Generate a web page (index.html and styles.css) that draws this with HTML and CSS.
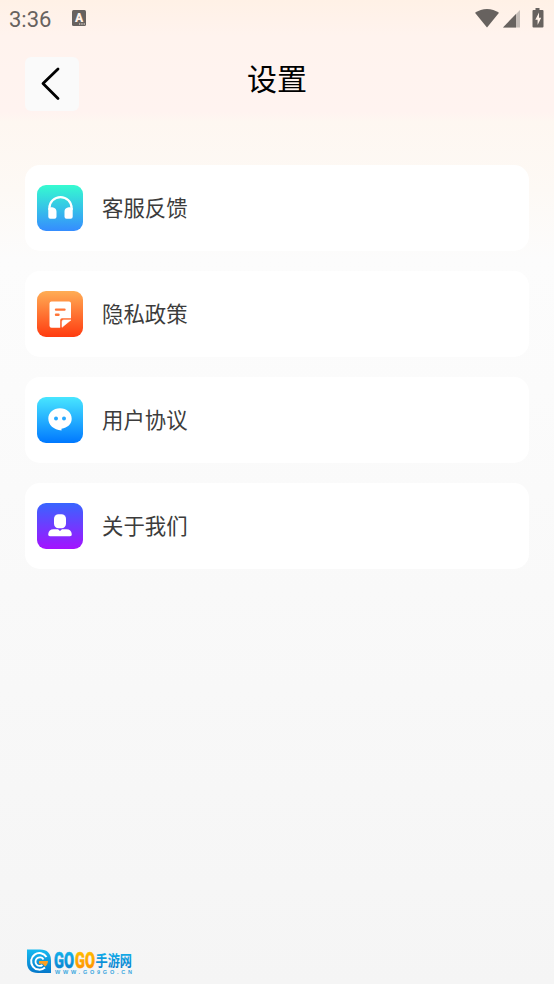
FILE: index.html
```html
<!DOCTYPE html>
<html lang="zh-CN">
<head>
    <meta charset="UTF-8">
    <title>设置</title>
    <link rel="stylesheet" href="styles.css">
</head>
<body>
<div class="page">
    <!-- 状态栏 -->
    <div class="status">
        <span class="time">3:36</span>
        <svg class="ic_a" width="14" height="16" viewBox="0 0 14 16">
            <rect width="14" height="16" rx="1.5" fill="#67625f"/>
            <text class="a_txt" x="7" y="11.5" text-anchor="middle">A</text>
            <path d="M7 14h1.300M9.300 14h1.300M11.600 14h1.300" stroke="#fff2e9" stroke-width="1"/>
        </svg>
        <svg class="ic_state" width="70" height="22" viewBox="0 0 70 22">
            <path d="M0 4.8C7-.4 17-.4 24 4.8L12 19.5z" fill="#67625f"/>
            <path d="M45 2v17.500H28z" fill="#c5bdb8"/>
            <path d="M41 6.100v13.400H28z" fill="#67625f"/>
            <path d="M60.500 0h4v2h3a1 1 0 0 1 1 1v15.500a1 1 0 0 1-1 1h-9a1 1 0 0 1-1-1V3a1 1 0 0 1 1-1h2z" fill="#67625f"/>
            <path d="M64 4.500l-3.700 7.200h2.300V17l3.600-7.200h-2.200z" fill="#fff2e9"/>
        </svg>
    </div>
    <!-- 标题 -->
    <div class="head">
        <div class="back">
            <svg width="54" height="54" viewBox="0 0 54 54">
                <path d="M33 12L18 26.500L33 41.500" fill="none" stroke="#000" stroke-width="2.800" stroke-linecap="round" stroke-linejoin="round"/>
            </svg>
        </div>
        <h1 class="title">设置</h1>
    </div>
    <!-- 列表 -->
    <div class="list">
        <div class="item">
            <div class="icon icon_kf">
                <svg width="46" height="46" viewBox="0 0 46 46">
                    <path d="M12.400 25v-2a11.100 10.900 0 0 1 22.200 0V25" fill="none" stroke="#fff" stroke-width="2.200"/>
                    <path d="M11.300 23c2-1.400 8.200-1 8.200 3.500v5.200q0 2-2 2h-4.200q-2 0-2-2zM35.700 23c-2-1.400-8.200-1-8.200 3.500v5.200q0 2 2 2h4.200q2 0 2-2z" fill="#fff"/>
                </svg>
            </div>
            <span class="name">客服反馈</span>
        </div>
        <div class="item">
            <div class="icon icon_ys">
                <svg width="46" height="46" viewBox="0 0 46 46">
                    <path d="M14.500 10.500h17.500q2 0 2 2v14.800H25q-1.800 0-1.800 1.800v7.600h-8.700q-2 0-2-2V12.500q0-2 2-2z" fill="#fff"/>
                    <path d="M25 36.300V30.600q0-1.700 1.700-1.700H34z" fill="#fff" stroke="#fff" stroke-width=".6" stroke-linejoin="round"/>
                    <path d="M19 18.600h8.500M19 23.800h2.500" stroke="#ff7638" stroke-width="2.400" stroke-linecap="round"/>
                </svg>
            </div>
            <span class="name">隐私政策</span>
        </div>
        <div class="item">
            <div class="icon icon_xy">
                <svg width="46" height="46" viewBox="0 0 46 46">
                    <path d="M23 11.200c6.700 0 11.700 4.400 11.700 10.500 0 5.500-4.200 8.900-10.200 10v1.900c-7.800-.7-13.200-5.500-13.200-12 0-6 5-10.400 11.700-10.400z" fill="#fff"/>
                    <circle cx="19" cy="21.500" r="2" fill="#28a9ff"/>
                    <circle cx="27" cy="21.500" r="2" fill="#28a9ff"/>
                </svg>
            </div>
            <span class="name">用户协议</span>
        </div>
        <div class="item">
            <div class="icon icon_gy">
                <svg width="46" height="46" viewBox="0 0 46 46">
                    <rect x="17" y="11.300" width="12" height="14" rx="4.500" fill="#fff"/>
                    <path d="M16.500 26.300h4.500l2 1.700 2-1.700h4.500q4.700 0 5.300 5 .2 2-1.800 2H13q-2 0-1.800-2 .6-5 5.300-5z" fill="#fff"/>
                </svg>
            </div>
            <span class="name">关于我们</span>
        </div>
    </div>
    <!-- 底部logo -->
    <div class="foot">
        <svg width="110" height="28" viewBox="0 0 110 28">
            <defs>
                <linearGradient id="blue" x1="0" y1="0" x2="0" y2="1">
                    <stop offset="0" stop-color="#17baf0"/>
                    <stop offset="1" stop-color="#0578ca"/>
                </linearGradient>
                <linearGradient id="orange" x1="0" y1="0" x2="0" y2="1">
                    <stop offset="0" stop-color="#ffc400"/>
                    <stop offset="1" stop-color="#ff8900"/>
                </linearGradient>
            </defs>
            <path d="M2 1.500h13Q26 1.500 26 13v12H13Q2 25 2 14z" fill="url(#blue)"/>
            <path d="M21.500 9a8.300 8.300 0 1 0-1.500 10.500" fill="none" stroke="#fff" stroke-width="2"/>
            <path d="M18.500 11.500a4.300 4.300 0 1 0-1 5.500" fill="none" stroke="#fff" stroke-width="1.800"/>
            <path d="M14 13h9c0 2.500-1.300 4.300-2.800 5.500l-2.700-2.800h-3.500z" fill="#ffa022"/>
            <text class="logo_go" x="29" y="20" textLength="20" lengthAdjust="spacingAndGlyphs" fill="url(#blue)" stroke="url(#blue)">GO</text>
            <text class="logo_go" x="50" y="20" textLength="20" lengthAdjust="spacingAndGlyphs" fill="url(#orange)" stroke="url(#orange)">GO</text>
            <text class="logo_cn" x="70.500" y="18" textLength="36.500" lengthAdjust="spacingAndGlyphs" fill="url(#blue)">手游网</text>
            <text class="logo_url" x="30" y="26" textLength="77">WWW.GO9GO.CN</text>
        </svg>
    </div>
</div>
</body>
</html>
```
FILE: styles.css
```css
body{
    margin: 0;
    font-family: "Noto Sans CJK SC", sans-serif;
}
.page{
    display: flex;
    flex-direction: column;
    box-sizing: border-box;
    height: 984px;
    padding: 0 25px;
    background: linear-gradient(#fff1e6 0, #fff3ee 36px, #fff3f0 112px, #fef7f1 122px, #fdf9f5 190px, #fcfcfc 260px, #fbfbfb 390px, #f8f8f8 690px, #f5f5f5 984px);
}
.status{
    display: flex;
    align-items: flex-start;
    height: 57px;
    margin: 0 -16px;
}
.time{
    width: 63px;
    padding-top: 7px;
    font: 22px/26px Roboto, sans-serif;
    color: #67625f;
}
.ic_a{
    margin-top: 10px;
}
.a_txt{
    font: 900 12px Roboto, sans-serif;
    fill: #fff2e9;
}
.ic_state{
    margin: 8px 0 0 auto;
}
.head{
    display: grid;
    grid-template-columns: 54px 1fr 54px;
    height: 108px;
}
.back{
    width: 54px;
    height: 54px;
    border-radius: 6px;
    background-color: #fafafa;
}
.title{
    margin: 0;
    font-size: 30px;
    line-height: 40px;
    font-weight: 400;
    text-align: center;
    color: #000;
}
.list{
    display: flex;
    flex-direction: column;
    gap: 20px;
}
.item{
    display: flex;
    align-items: center;
    gap: 19px;
    height: 86px;
    padding-left: 12px;
    border-radius: 15px;
    background-color: #fff;
}
.icon{
    width: 46px;
    height: 46px;
    border-radius: 9px;
}
.icon svg,.back svg,.foot svg{
    display: block;
    overflow: visible;
}
.icon_kf{
    background: linear-gradient(#36fbd0, #358cff);
}
.icon_ys{
    background: linear-gradient(#ffad55, #ff3b10);
}
.icon_xy{
    background: linear-gradient(#48e6ff, #0078ff);
}
.icon_gy{
    background: linear-gradient(#3865ff, #a412ff);
}
.name{
    padding-bottom: 2px;
    font-size: 21.4px;
    line-height: 32px;
    color: #3c3c3c;
}
.foot{
    margin-top: auto;
    padding-bottom: 8px;
}
.logo_go{
    font: 900 22px Roboto, sans-serif;
    stroke-width: .5px;
}
.logo_cn{
    font: bold 15px "Noto Sans CJK SC", sans-serif;
}
.logo_url{
    font: bold 5.5px "Liberation Sans", sans-serif;
    fill: #3aa6df;
}
```
